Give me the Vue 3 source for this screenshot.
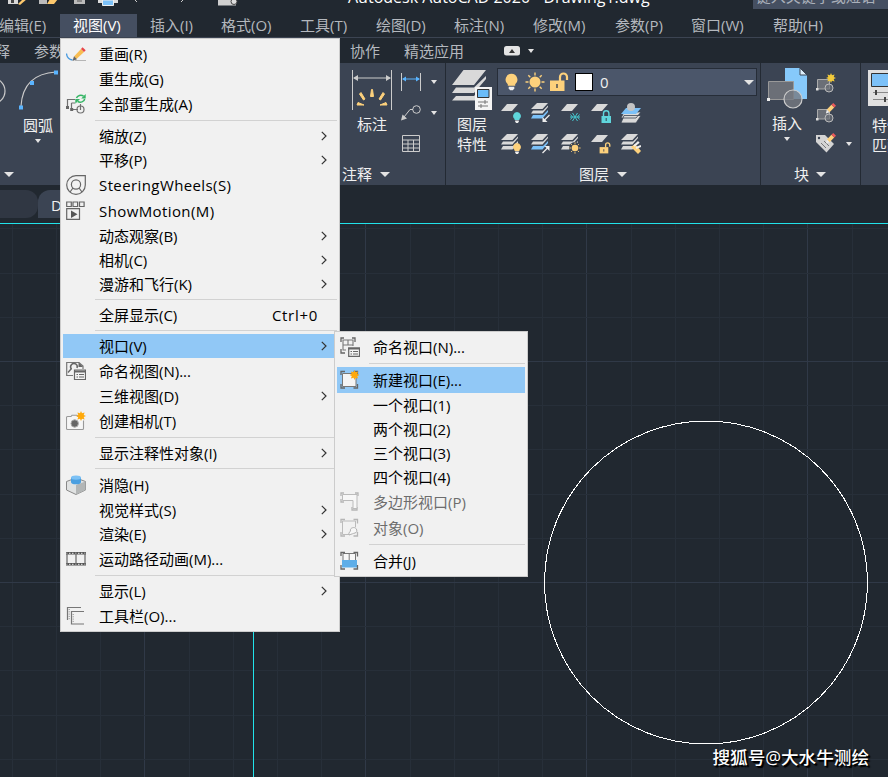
<script setup>
import { ref } from 'vue';

const active = ref('视图(V)');

const menuBar = [
  { label: '编辑(E)', width: 74 },
  { label: '视图(V)', width: 77 },
  { label: '插入(I)', width: 71 },
  { label: '格式(O)', width: 79 },
  { label: '工具(T)', width: 76 },
  { label: '绘图(D)', width: 78 },
  { label: '标注(N)', width: 79 },
  { label: '修改(M)', width: 82 },
  { label: '参数(P)', width: 76 },
  { label: '窗口(W)', width: 82 },
  { label: '帮助(H)', width: 78 },
];

const viewMenu = [
  { label: '重画(R)', icon: 'redraw' },
  { label: '重生成(G)' },
  { label: '全部重生成(A)', icon: 'regen' },
  { sep: true },
  { label: '缩放(Z)', sub: true },
  { label: '平移(P)', sub: true },
  { label: 'SteeringWheels(S)', icon: 'wheel', latin: true },
  { label: 'ShowMotion(M)', icon: 'motion', latin: true },
  { label: '动态观察(B)', sub: true },
  { label: '相机(C)', sub: true },
  { label: '漫游和飞行(K)', sub: true },
  { sep: true },
  { label: '全屏显示(C)', key: 'Ctrl+0' },
  { sep: true },
  { label: '视口(V)', sub: true, on: true },
  { label: '命名视图(N)...', icon: 'named-view' },
  { label: '三维视图(D)', sub: true },
  { label: '创建相机(T)', icon: 'camera' },
  { sep: true },
  { label: '显示注释性对象(I)', sub: true },
  { sep: true },
  { label: '消隐(H)', icon: 'hide' },
  { label: '视觉样式(S)', sub: true },
  { label: '渲染(E)', sub: true },
  { label: '运动路径动画(M)...', icon: 'film' },
  { sep: true },
  { label: '显示(L)', sub: true },
  { label: '工具栏(O)...', icon: 'toolbars' },
];

const viewportMenu = [
  { label: '命名视口(N)...', icon: 'named-vp' },
  { sep: true },
  { label: '新建视口(E)...', icon: 'new-vp', on: true },
  { label: '一个视口(1)' },
  { label: '两个视口(2)' },
  { label: '三个视口(3)' },
  { label: '四个视口(4)' },
  { label: '多边形视口(P)', icon: 'poly-vp', disabled: true },
  { label: '对象(O)', icon: 'obj-vp', disabled: true },
  { sep: true },
  { label: '合并(J)', icon: 'join-vp' },
];

const layerTools = ['l-off', 'l-cur', 'l-freeze', 'l-lock', 'l-match', 'l-on', 'l-prev', 'l-thaw', 'l-unlock', 'l-state'];

// grid lines, every fifth one is a major line
const step = 44.2;
const cols = [];
for (let i = -3; i <= 16; i++) cols.push({ p: Math.round(144.3 + i * step) + 0.5, major: i % 5 === 0 });
const rows = [];
for (let i = -3; i <= 9; i++) rows.push({ p: Math.round(361 + i * step) + 0.5, major: i % 5 === 0 });
</script>

<template>
  <div class="cad">
    <svg class="defs" width="0" height="0">
      <symbol id="redraw" viewBox="0 0 20 20">
        <path d="M.5 9.500Q1 15 6.500 16" fill="none" stroke="#4a9be0" stroke-width="1.300" />
        <path d="M9 16.500H20" stroke="#b5b5b5" />
        <path d="M8 12.500L15 5l3 3-7.500 7z" fill="#f8bd52" />
        <path d="M15 5l1.500-1.700 3.200 3L18 8z" fill="#e8464a" />
        <path d="M8 12.300l3 3L6.500 17z" fill="#666" />
      </symbol>
      <symbol id="regen" viewBox="0 0 20 20">
        <path d="M9 5.500H1.500V13M5.500 9v6.500H12M5.500 9H9M14.500 10v6" fill="none" stroke="#707070" stroke-width="1.200" />
        <path d="M0 12h3v3H0zM4.200 14h3v3h-3z" fill="#666" />
        <circle cx="14.500" cy="15.500" r="3.500" fill="none" stroke="#707070" stroke-width="1.200" />
        <path d="M10.500 4a4.500 3.800 0 0 1 7-2M18.700 5a4.500 3.800 0 0 1-7 2.500" fill="none" stroke="#35b565" stroke-width="1.500" />
        <path d="M19.700 0v4.500h-4.500zM9.300 9.700V5h4.700z" fill="#35b565" />
      </symbol>
      <symbol id="wheel" viewBox="0 0 20 20">
        <path d="M10 .7H19.300V10A9.300 9.300 0 1 1 10 .7z" fill="none" stroke="#666" stroke-width="1.200" />
        <circle cx="10" cy="9.500" r="4.600" fill="none" stroke="#666" stroke-width="1.200" />
        <path d="M7 13L4 17M13 13l3 4" stroke="#666" stroke-width="1.200" />
      </symbol>
      <symbol id="motion" viewBox="0 0 20 20">
        <path d="M.7 1h4.600v4.500H.7zM7 1h4.600v4.500H7zM13.500 1h4.600v4.500h-4.600zM.7 7.700h12.800v10.600H.7z" fill="none" stroke="#666" stroke-width="1.200" />
        <path d="M5 9.500v7.500l6.500-3.700z" fill="#555" />
      </symbol>
      <symbol id="named-view" viewBox="0 0 20 20">
        <path d="M7 14.500H.7V1.500H13l4 3.500v3" fill="none" stroke="#777" stroke-width="1.200" />
        <path d="M12.500 1v5H17z" fill="#666" />
        <path d="M2 11.500l3.500-4" fill="none" stroke="#666" stroke-width="1.300" />
        <path d="M5.500 8a3.300 3.300 0 1 1 5.500-1" fill="none" stroke="#666" stroke-width="1.500" />
        <path d="M8.500 9h11v9.500h-11z" fill="#f4f4f4" stroke="#666" stroke-width="1.200" />
        <path d="M8 9.500h12v2H8z" fill="#666" />
        <path d="M10.500 13.500h1.500M13 13.500h5M10.500 16h1.500M13 16h5" stroke="#666" />
      </symbol>
      <symbol id="camera" viewBox="0 0 20 20">
        <path d="M14 5.500H12l-1-1.300H6L5 5.500H1.500a1 1 0 0 0-1 1v11a1 1 0 0 0 1 1h15a1 1 0 0 0 1-1v-8" fill="#f6f6f6" stroke="#999" stroke-width="1.100" />
        <circle cx="8.700" cy="12.500" r="3.700" fill="#666" stroke="#aaa" />
        <use href="#spark" x="10" y="0" width="10" height="10" />
      </symbol>
      <symbol id="spark" viewBox="0 0 10 10">
        <path d="M5 0l1 2.300L8.600 1.400 7.700 4 10 5 7.700 6l.9 2.600L6 7.700 5 10 4 7.700 1.400 8.600 2.300 6 0 5l2.300-1L1.400 1.400 4 2.300z" fill="#ffa90a" />
      </symbol>
      <symbol id="hide" viewBox="0 0 20 20">
        <path d="M.5 6.500L10 3l9.500 3.500V15L10 19.500.5 15z" fill="#e0e2e2" stroke="#888" />
        <path d="M10 10v9.500l9.500-4.500V6.500z" fill="#b3b6b6" />
        <path d="M5 2.500v4.500a5 2.300 0 0 0 10 0V2.500z" fill="#4a9fe0" />
        <ellipse cx="10" cy="2.600" rx="5" ry="2.200" fill="#7cc1f5" />
      </symbol>
      <symbol id="film" viewBox="0 0 20 20">
        <path d="M0 4.300h20M0 15.300h20" stroke="#555" stroke-width="2.600" />
        <path d="M0 4.300h20M0 15.300h20" stroke="#eee" stroke-width="1" stroke-dasharray="1.500 1.500" />
        <path d="M1 4v12M10 4v12M19 4v12" stroke="#666" stroke-width="1.200" />
      </symbol>
      <symbol id="toolbars" viewBox="0 0 20 20">
        <path d="M15 1.500H1.500V14M18 5.500H5.500v12.500H18" fill="none" stroke="#777" stroke-width="1.200" />
        <path d="M3.200 3v11M7.200 8v9" stroke="#888" stroke-dasharray="1 1.300" />
      </symbol>
      <symbol id="corners" viewBox="0 0 20 20">
        <path d="M1 5V1.500h4M13.500 1.500h4v4M1 14v4h4M13.500 18h4v-4" fill="none" stroke="currentColor" stroke-width="1.300" />
      </symbol>
      <symbol id="named-vp" viewBox="0 0 20 20">
        <path d="M1 5V1h3M12 1h3v4M1 12v4h4" fill="none" stroke="#666" stroke-width="1.300" />
        <path d="M6 13H3V3h10v6M3 8h10M8 3v5" fill="none" stroke="#777" stroke-width="1.100" />
        <path d="M8.700 11h10.800v8.300H8.700z" fill="#f4f4f4" stroke="#666" stroke-width="1.200" />
        <path d="M8 10.500h12v2H8z" fill="#666" />
        <path d="M10.500 14.500h1.500M13 14.500h5M10.500 17h1.500M13 17h5" stroke="#666" />
      </symbol>
      <symbol id="new-vp" viewBox="0 0 20 20">
        <use href="#corners" color="#666" />
        <path d="M2.500 3.500h13.500v13h-13.500z" fill="#f4f4f4" stroke="#777" />
        <use href="#spark" x="9.500" y="0" width="10" height="10" />
      </symbol>
      <symbol id="poly-vp" viewBox="0 0 20 20">
        <path d="M1 4V1h3M15 1h3v3M1 7v3h3M12 15v3h5v-3" fill="none" stroke="#b5b5b5" stroke-width="1.300" />
        <path d="M2.500 2.500H17v14h-4V8.500H2.500z" fill="#f7f7f7" stroke="#bbb" />
      </symbol>
      <symbol id="obj-vp" viewBox="0 0 20 20">
        <use href="#corners" color="#b5b5b5" />
        <path d="M10 16.500H2.500V3h13v6" fill="none" stroke="#bbb" />
        <path d="M9 17c-1-3 2-3 1.500-5s4-3.500 5.500-1.500 1 4-1 4.500-3 1-6 2z" fill="#f7f7f7" stroke="#b0b0b0" />
      </symbol>
      <symbol id="join-vp" viewBox="0 0 20 20">
        <path d="M3 2.500h12.500v7H3zM9.200 2.500v7" fill="#f8f8f8" stroke="#777" />
        <path d="M2 9h15v7.500H2z" fill="#5faee8" />
        <use href="#corners" color="#666" />
      </symbol>

      <!-- ribbon glyphs -->
      <symbol id="sheet" viewBox="0 0 20 20"><path d="M6 0h11l-6 7H0z" fill="#d9d9d9" /></symbol>
      <symbol id="stack" viewBox="0 0 20 20">
        <path d="M6 0h11l-5.500 6H0z" fill="#d9d9d9" />
        <path d="M2 7.500L0 10.500h11.500l5.500-6.500v-1.500L12 7.500z" fill="#d9d9d9" />
        <path d="M2 12L0 15.500h11.500l5.500-6.500v-2L12 12z" fill="var(--last, #d9d9d9)" />
      </symbol>
      <symbol id="bulb" viewBox="0 0 14 18">
        <path d="M7 0a6.500 6.500 0 0 1 4 11.500V13H3v-1.500A6.500 6.500 0 0 1 7 0z" fill="currentColor" />
        <path d="M4 14h6v2L8.500 18h-3L4 16z" fill="#eee" />
      </symbol>
      <symbol id="sun" viewBox="0 0 20 20">
        <circle cx="10" cy="10" r="5.500" fill="#fdd17c" />
        <path d="M10 .5v3M10 16.500v3M.5 10h3M16.500 10h3M3.300 3.300l2 2M14.700 14.700l2 2M16.700 3.300l-2 2M5.300 14.700l-2 2" stroke="#fdd17c" stroke-width="1.400" />
      </symbol>
      <symbol id="unlock" viewBox="0 0 20 20">
        <path d="M11 9V5a3.500 3.500 0 0 1 7 0v3" fill="none" stroke="#fdd17c" stroke-width="2.200" />
        <path d="M1 8.500h14.500v10.500H1z" fill="#fdd17c" /><path d="M8 12v4" stroke="#555" stroke-width="1.600" />
      </symbol>
      <symbol id="l-off" viewBox="0 0 20 20"><use href="#sheet" width="20" height="20" y="1" /><use href="#bulb" color="#5fd6dc" x="11" y="9" width="10" height="11" /></symbol>
      <symbol id="l-cur" viewBox="0 0 20 20"><use href="#stack" class="blue" width="20" height="20" /><path d="M18.500 12l-5 5" stroke="#eee" stroke-width="1.300" /><path d="M11.500 14v5h5z" fill="#eee" /></symbol>
      <symbol id="l-freeze" viewBox="0 0 20 20"><use href="#sheet" width="20" height="20" y="1" /><path d="M9 14h10M11.500 10l5 8M16.500 10l-5 8M9.500 11.500l2 2.500-2 2.500M18.500 11.500l-2 2.500 2 2.500" stroke="#45c7cf" fill="none" /></symbol>
      <symbol id="l-lock" viewBox="0 0 20 20"><use href="#sheet" width="20" height="20" y="1" /><path d="M12.500 13v-2.500a2.700 2.700 0 0 1 5.400 0V13" fill="none" stroke="#5fd6dc" stroke-width="1.400" /><path d="M10.500 13h9.500v7h-9.500z" fill="#5fd6dc" /><path d="M15.200 15v3" stroke="#345" /></symbol>
      <symbol id="l-match" viewBox="0 0 20 20"><path d="M3 12.500h17l-5 7.500H0zM3 9h17l-5 6H0z" fill="#d9d9d9" stroke="#3b4453" stroke-width=".8" /><path d="M5 5h15l-5 6H0z" fill="#7cc1f8" /><circle cx="10" cy="4" r="4" fill="#c4c4c4" /></symbol>
      <symbol id="l-on" viewBox="0 0 20 20"><use href="#stack" width="20" height="20" /><use href="#bulb" color="#fdd17c" x="11" y="9" width="10" height="11" /></symbol>
      <symbol id="l-prev" viewBox="0 0 20 20"><use href="#stack" class="blue" width="20" height="20" /><path d="M11.500 19l5-5" stroke="#eee" stroke-width="1.300" /><path d="M13.500 12h5v5z" fill="#eee" /></symbol>
      <symbol id="l-thaw" viewBox="0 0 20 20"><use href="#stack" width="20" height="20" /><circle cx="14" cy="14" r="6" fill="#3b4453" /><use href="#sun" x="8" y="8" width="12" height="12" /></symbol>
      <symbol id="l-unlock" viewBox="0 0 20 20"><use href="#sheet" width="20" height="20" y="1" /><use href="#unlock" x="8" y="8" width="12" height="12" /></symbol>
      <symbol id="l-state" viewBox="0 0 20 20"><use href="#stack" width="20" height="20" /><path d="M10 13l4-3 6 7-3 3z" fill="#fdd17c" /><path d="M13 12l5-4M15 14l5-2" stroke="#eee" stroke-width="2" /></symbol>
      <symbol id="block" viewBox="0 0 20 20">
        <path d="M1.500 6.500h12v9.500h-12z" fill="#6b6f77" stroke="#aaa" />
        <circle cx="13" cy="15" r="4" fill="#6b6f77" fill-opacity=".7" stroke="#bbb" />
        <path d="M0 15h2.500v2.500H0z" fill="#ddd" />
      </symbol>
      <symbol id="pen" viewBox="0 0 12 12"><path d="M2 7l5-5 3 3-5 5z" fill="#fdd17c" /><path d="M7 2l2-2 3 3-2 2z" fill="#ee5a5a" /><path d="M2 7l3 3-4 1.500z" fill="#eee" /></symbol>
      <symbol id="b-new" viewBox="0 0 20 20"><use href="#block" width="20" height="20" /><g class="pale"><use href="#spark" x="10" y="0" width="10" height="10" /></g></symbol>
      <symbol id="b-edit" viewBox="0 0 20 20"><use href="#block" width="20" height="20" /><use href="#pen" x="9" y="0" width="11" height="11" /></symbol>
      <symbol id="b-attr" viewBox="0 0 20 20"><path d="M0 2h9l9 9-7.500 8.500L0 9z" fill="#d4d4d4" /><circle cx="3" cy="5" r="1.200" fill="#3b4453" /><path d="M5 10l5 5M8 8l5 5" stroke="#777" /><use href="#pen" x="9" y="0" width="11" height="11" /></symbol>
    </svg>

    <header class="titlebar">
      <svg class="quick" width="250" height="8">
        <path d="M8 0h10v4h-10z" fill="#d8d8d8" /><path d="M11 0h3v3h-3z" fill="#444" /><path d="M18 4l5-5h4l-7 6z" fill="#fdc86d" />
        <path d="M39 0h8v4h-8z" fill="#bbb" /><path d="M47 4l3-5h8l-4 5z" fill="#fdc86d" />
        <path d="M74 0h11v4H74z" fill="#bbb" /><path d="M77 1h5" stroke="#555" />
        <path d="M98 0h20v3H98z" fill="#ddd" /><path d="M102.500 0h11v5.500h-11z" fill="#7cc1f8" stroke="#eee" />
        <path d="M135 0l2 2M181 2l2-2" stroke="#ccc" />
        <path d="M218 0h18v5.500h-18z" fill="#cfcfcf" /><circle cx="234" cy="1.500" r="3" fill="#ddd" stroke="#444" />
      </svg>
      <span class="title">Autodesk AutoCAD 2020 - Drawing1.dwg</span>
      <div class="search"><span>键入关键字或短语</span></div>
    </header>

    <nav class="menubar">
      <span
        v-for="m in menuBar"
        :key="m.label"
        :class="['menu-item', { active: m.label === active }]"
        :style="{ width: m.width + 'px' }"
        @click="active = m.label"
      >{{ m.label }}</span>
    </nav>

    <div class="tabs">
      <span class="tab first">注释</span>
      <span class="tab param">参数化</span>
      <span class="tab coop">协作</span>
      <span class="tab apps">精选应用</span>
      <svg width="32" height="12"><rect x="1" y="1" width="16" height="9.500" rx="2.500" fill="#e4e4e4" /><path d="M6 8l3-4 3 4z" fill="#333" /><path d="M25 4h6l-3 4z" fill="#e4e4e4" /></svg>
    </div>

    <div class="ribbon">
      <section class="panel draw">
        <div class="body">
          <div class="arc-tool">
            <svg width="60" height="50">
              <circle cx="-8" cy="28" r="13" fill="none" stroke="#ccc" stroke-width="1.200" />
              <path d="M21 43Q23 11 56 9" fill="none" stroke="#ccc" stroke-width="1.200" />
              <path d="M19 42.500h4v4h-4zM30 18h4v4h-4zM54 7.500h4v4h-4z" fill="#5ab4ff" />
            </svg>
            <span>圆弧</span>
            <i class="caret small"></i>
          </div>
          <div class="dim-tool">
            <svg width="40" height="40">
              <path d="M.5 0v40M39.500 0v40M2 8h36" stroke="#ccc" />
              <path d="M1 8l5-3v6zM39 8l-5-3v6z" fill="#ccc" />
              <path d="M18.500 26.500l1-7h1l1 7zM27 29l4-6.500 1.500 1.500-4 6zM13 29l-4-6.500L7.500 24l4 6zM28 35l6-2.500 1 2.500zM12 35l-6-2.500L5 35z" fill="#fdd17c" stroke="#fdd17c" />
            </svg>
            <span>标注</span>
          </div>
          <div class="dim-small">
            <svg width="20" height="18"><path d="M.5 0v18M19.500 0v18" stroke="#ccc" /><path d="M2 6h16" stroke="#5ab4ff" /><path d="M1 6l4-2.500v5zM19 6l-4-2.500v5z" fill="#5ab4ff" /></svg>
            <i class="caret small"></i>
            <svg width="20" height="16"><circle cx="15.500" cy="4.500" r="3.800" fill="none" stroke="#ccc" /><path d="M12 4.500H9L3 12" fill="none" stroke="#ccc" /><path d="M0 15.500l1.500-6 4.500 4z" fill="#ccc" /></svg>
            <i class="caret small"></i>
            <svg width="20" height="18"><path d="M1.500.5h17v16h-17zM1.500 5h17M1.500 9h17M1.500 13h17M7 5v11.500M12.500 5v11.500" fill="none" stroke="#ccc" /></svg>
          </div>
        </div>
        <footer><i class="caret"></i><span class="note">注释</span><i class="caret"></i></footer>
      </section>

      <section class="panel layers">
        <div class="body">
          <div class="layer-props">
            <svg width="41" height="41">
              <path d="M11.500 1H34L22 16H0zM4 18.500L0 24h22l12-14V7L22 18.500zM4 27L0 31.500h24V25l-2 2z" fill="#d9d9d9" />
              <path d="M23 18h17v23H23z" fill="#f4f4f4" /><path d="M25.500 20.500h11.500v8H25.500z" fill="#6bbcf8" stroke="#333" />
              <path d="M26 33h10M26 37h10M33 31v4M29 35v4" stroke="#777" />
            </svg>
            <span>图层<br />特性</span>
          </div>
          <div class="layer-right">
            <div class="layer-select">
              <svg class="s-bulb"><use href="#bulb" color="#fdd17c" /></svg>
              <svg class="s-sun"><use href="#sun" /></svg>
              <svg class="s-lock"><use href="#unlock" /></svg>
              <b class="swatch"></b>
              <span>0</span>
              <i class="caret"></i>
            </div>
            <div class="layer-grid">
              <svg v-for="t in layerTools" :key="t" class="icon"><use :href="'#' + t" /></svg>
            </div>
          </div>
        </div>
        <footer><span>图层</span><i class="caret"></i></footer>
      </section>

      <section class="panel blocks">
        <div class="body">
          <div class="insert-tool">
            <svg width="42" height="42">
              <path d="M18 0h15l7 7v24H18z" fill="#86c9fb" /><path d="M33 0v7h7z" fill="#dceefb" stroke="#3b4453" />
              <path d="M1.500 13.500h25v18h-25z" fill="#6b6f77" stroke="#999" />
              <circle cx="26" cy="31" r="9" fill="#777b82" fill-opacity=".8" stroke="#ccc" stroke-width="1.200" /><path d="M0 30h3v3H0z" fill="#eee" />
            </svg>
            <span>插入</span>
            <i class="caret small"></i>
          </div>
          <div class="block-small">
            <svg class="icon"><use href="#b-new" /></svg>
            <svg class="icon"><use href="#b-edit" /></svg>
            <svg class="icon"><use href="#b-attr" /></svg>
          </div>
          <i class="caret small attr"></i>
        </div>
        <footer><span>块</span><i class="caret"></i></footer>
      </section>

      <section class="panel props">
        <svg width="40" height="36">
          <path d="M0 0h40v36H0z" fill="#e0e0e0" /><path d="M3.500 3.500h30v13h-30z" fill="#7cc1f8" stroke="#333" />
          <path d="M5 22.500h30M5 29.500h30" stroke="#888" /><path d="M8 20v5M17 27v5" stroke="#444" stroke-width="2" />
        </svg>
        <span>特性<br />匹配</span>
      </section>
    </div>

    <div class="filetabs">
      <span class="file-tab start"></span>
      <span class="file-tab current">Drawing1</span>
    </div>

    <main class="canvas">
      <svg width="888" height="554" viewBox="0 223 888 554" shape-rendering="crispEdges">
        <path v-for="c in cols" :key="'c' + c.p" :d="`M${c.p} 224V777`" :class="{ major: c.major }" class="grid" />
        <path v-for="r in rows" :key="'r' + r.p" :d="`M0 ${r.p}H888`" :class="{ major: r.major }" class="grid" />
        <path d="M0 223.500H888M253.500 223V777" class="axis" />
        <circle cx="706" cy="582.500" r="161.500" fill="none" stroke="#fff" />
      </svg>
      <span class="watermark">搜狐号@大水牛测绘</span>
    </main>

    <div class="popup main-menu">
      <template v-for="(row, i) in viewMenu" :key="i">
        <hr v-if="row.sep" />
        <div v-else :class="['row', { tall: row.icon, on: row.on, latin: row.latin }]">
          <span class="gutter"><svg v-if="row.icon" class="icon"><use :href="'#' + row.icon" /></svg></span>
          <span class="label">{{ row.label }}</span>
          <span v-if="row.key" class="key">{{ row.key }}</span>
          <svg v-if="row.sub" class="arrow" width="6" height="10"><path d="M.8 .8L5 5 .8 9.200" fill="none" stroke="#333" stroke-width="1.200" /></svg>
        </div>
      </template>
    </div>

    <div class="popup sub-menu">
      <template v-for="(row, i) in viewportMenu" :key="i">
        <hr v-if="row.sep" />
        <div v-else :class="['row', { tall: row.icon, on: row.on, disabled: row.disabled }]">
          <span class="gutter"><svg v-if="row.icon" class="icon"><use :href="'#' + row.icon" /></svg></span>
          <span class="label">{{ row.label }}</span>
        </div>
      </template>
    </div>
  </div>
</template>

<style>
body { margin: 0; background: #212830; }
</style>

<style scoped>
.cad {
  position: relative;
  width: 888px;
  height: 777px;
  overflow: hidden;
  background: #212830;
  color: #f0f0f0;
  font-family: "Open Sans", "Noto Sans CJK SC", sans-serif;
  font-size: 15px;
  line-height: 20px;
  white-space: nowrap;
}
.defs { position: absolute; }
svg { display: block; flex: none; }
.icon { width: 20px; height: 20px; overflow: visible; }
.blue { --last: #7cc1f8; }
.pale { filter: brightness(1.2) saturate(0.75); }

.titlebar { display: flex; height: 14px; overflow: hidden; }
.quick { width: 250px; }
.title { margin: -13px 0 0 98px; width: 407px; font-size: 16px; color: #fff; }
.search { width: 133px; height: 9px; padding-left: 3px; background: #454f61; color: #aab0ba; overflow: hidden; }
.search span { display: block; margin-top: -14px; }

.menubar { display: flex; height: 23px; border-bottom: 1px solid #3c4452; color: #b4b8be; }
.menu-item { box-sizing: border-box; padding-left: 13px; line-height: 23px; flex: none; }
.menu-item:first-child { margin-left: -14px; }
.menu-item.active { background: #454f61; color: #fff; }

.tabs { display: flex; align-items: center; height: 25px; color: #b4b8be; }
.tab.first { margin-left: -20px; width: 54px; }
.tab.param { width: 316px; }
.tab.coop { width: 54px; }
.tab.apps { width: 99px; }

.ribbon { display: flex; height: 122px; background: #3b4453; }
.panel { display: flex; flex-direction: column; flex: none; box-sizing: border-box; border-right: 1px solid #232a33; }
.body { display: flex; height: 100px; }
.panel footer { display: flex; align-items: center; height: 22px; }
.draw { width: 446px; }
.layers { width: 315px; }
.blocks { width: 100px; }
.props { width: 60px; padding: 7px 0 0 7px; }
.props span { margin: 9px 0 0 4px; }

.caret { width: 0; height: 0; border: 5px solid transparent; border-top-color: #e4e4e4; border-bottom: 0; flex: none; }
.caret.small { border-width: 4px 3px 0; }

.arc-tool { display: flex; flex-direction: column; align-items: center; width: 76px; }
.arc-tool svg { align-self: flex-start; }
.arc-tool span { margin: 2px 0 4px; }
.dim-tool { display: flex; flex-direction: column; align-items: center; margin: 7px 0 0 276px; width: 40px; }
.dim-tool span { margin-top: 4px; }
.dim-small { display: grid; grid-template-columns: 30px 6px; grid-template-rows: 18px 16px 18px; row-gap: 14px; align-items: center; align-content: start; margin: 10px 0 0 9px; }
.draw footer .caret { margin-left: 4px; }
.draw footer .note { margin: 0 4px 0 328px; }

.layer-props { margin: 6px 5px 0 6px; width: 40px; }
.layer-props svg { margin-bottom: 4px; }
.layer-props span { display: block; margin-left: 5px; }
.layer-right { margin-top: 5px; }
.layer-select {
  display: flex;
  align-items: center;
  box-sizing: border-box;
  width: 260px;
  height: 28px;
  padding: 0 2px 0 7px;
  border: 1px solid #262d38;
  background: #4b566a;
}
.s-bulb { width: 13px; height: 18px; margin-right: 7px; }
.s-sun { width: 20px; height: 20px; margin-right: 4px; }
.s-lock { width: 20px; height: 20px; margin-right: 6px; }
.swatch { width: 16px; height: 16px; margin-right: 7px; background: #fff; border: 1px solid #000; }
.layer-select .caret { margin-left: auto; }
.layer-grid { display: grid; grid-template-columns: repeat(5, 30px); row-gap: 11px; margin: 7px 0 0 4px; }
.layers footer span { margin: 0 8px 0 133px; }

.insert-tool { display: flex; flex-direction: column; align-items: center; width: 42px; margin: 5px 0 0 6px; }
.insert-tool span { margin: 3px 2px 4px 0; }
.insert-tool .caret { margin-right: 2px; }
.block-small { display: flex; flex-direction: column; gap: 10px; margin: 10px 0 0 7px; }
.caret.attr { margin: 79px 0 0 10px; }
.blocks footer span { margin: 0 7px 0 33px; }

.filetabs { display: flex; height: 38px; padding-top: 5px; box-sizing: border-box; }
.file-tab { height: 28px; line-height: 31px; }
.file-tab.start { width: 38px; background: #303743; border-radius: 0 12px 12px 0; }
.file-tab.current { width: 130px; padding-left: 13px; background: #3b4453; border-radius: 12px 12px 0 0; }

.canvas { height: 554px; position: relative; }
.grid { stroke: #272f39; }
.grid.major { stroke: #303947; }
.axis { stroke: #21e3ea; fill: none; }
.watermark {
  position: absolute;
  right: 19px;
  bottom: 10px;
  font-size: 17.6px;
  font-weight: 500;
  color: #fff;
  text-shadow: 1px 1px 1px #000, 2px 2px 1px #000;
}

.popup {
  position: absolute;
  box-sizing: border-box;
  padding: 2px;
  background: #f1f1f1;
  border: 1px solid #ccc;
  color: #000;
}
.main-menu { left: 60px; top: 38px; width: 280px; }
.sub-menu { left: 334px; top: 331px; width: 194px; }
.row { display: flex; align-items: center; height: 24px; }
.row.tall { height: 26px; }
.row.on { background: #91c8f6; }
.row.disabled { color: #6d6d6d; }
.row.latin .label { letter-spacing: 0.4px; }
.gutter { width: 33px; padding-left: 3px; flex: none; }
.label { flex: 1; }
.key { margin-right: 19px; letter-spacing: 0.7px; }
.arrow { margin-right: 10px; }
.popup hr { height: 1px; margin: 3px 0 3px 32px; border: 0; background: #d2d2d2; }
</style>
